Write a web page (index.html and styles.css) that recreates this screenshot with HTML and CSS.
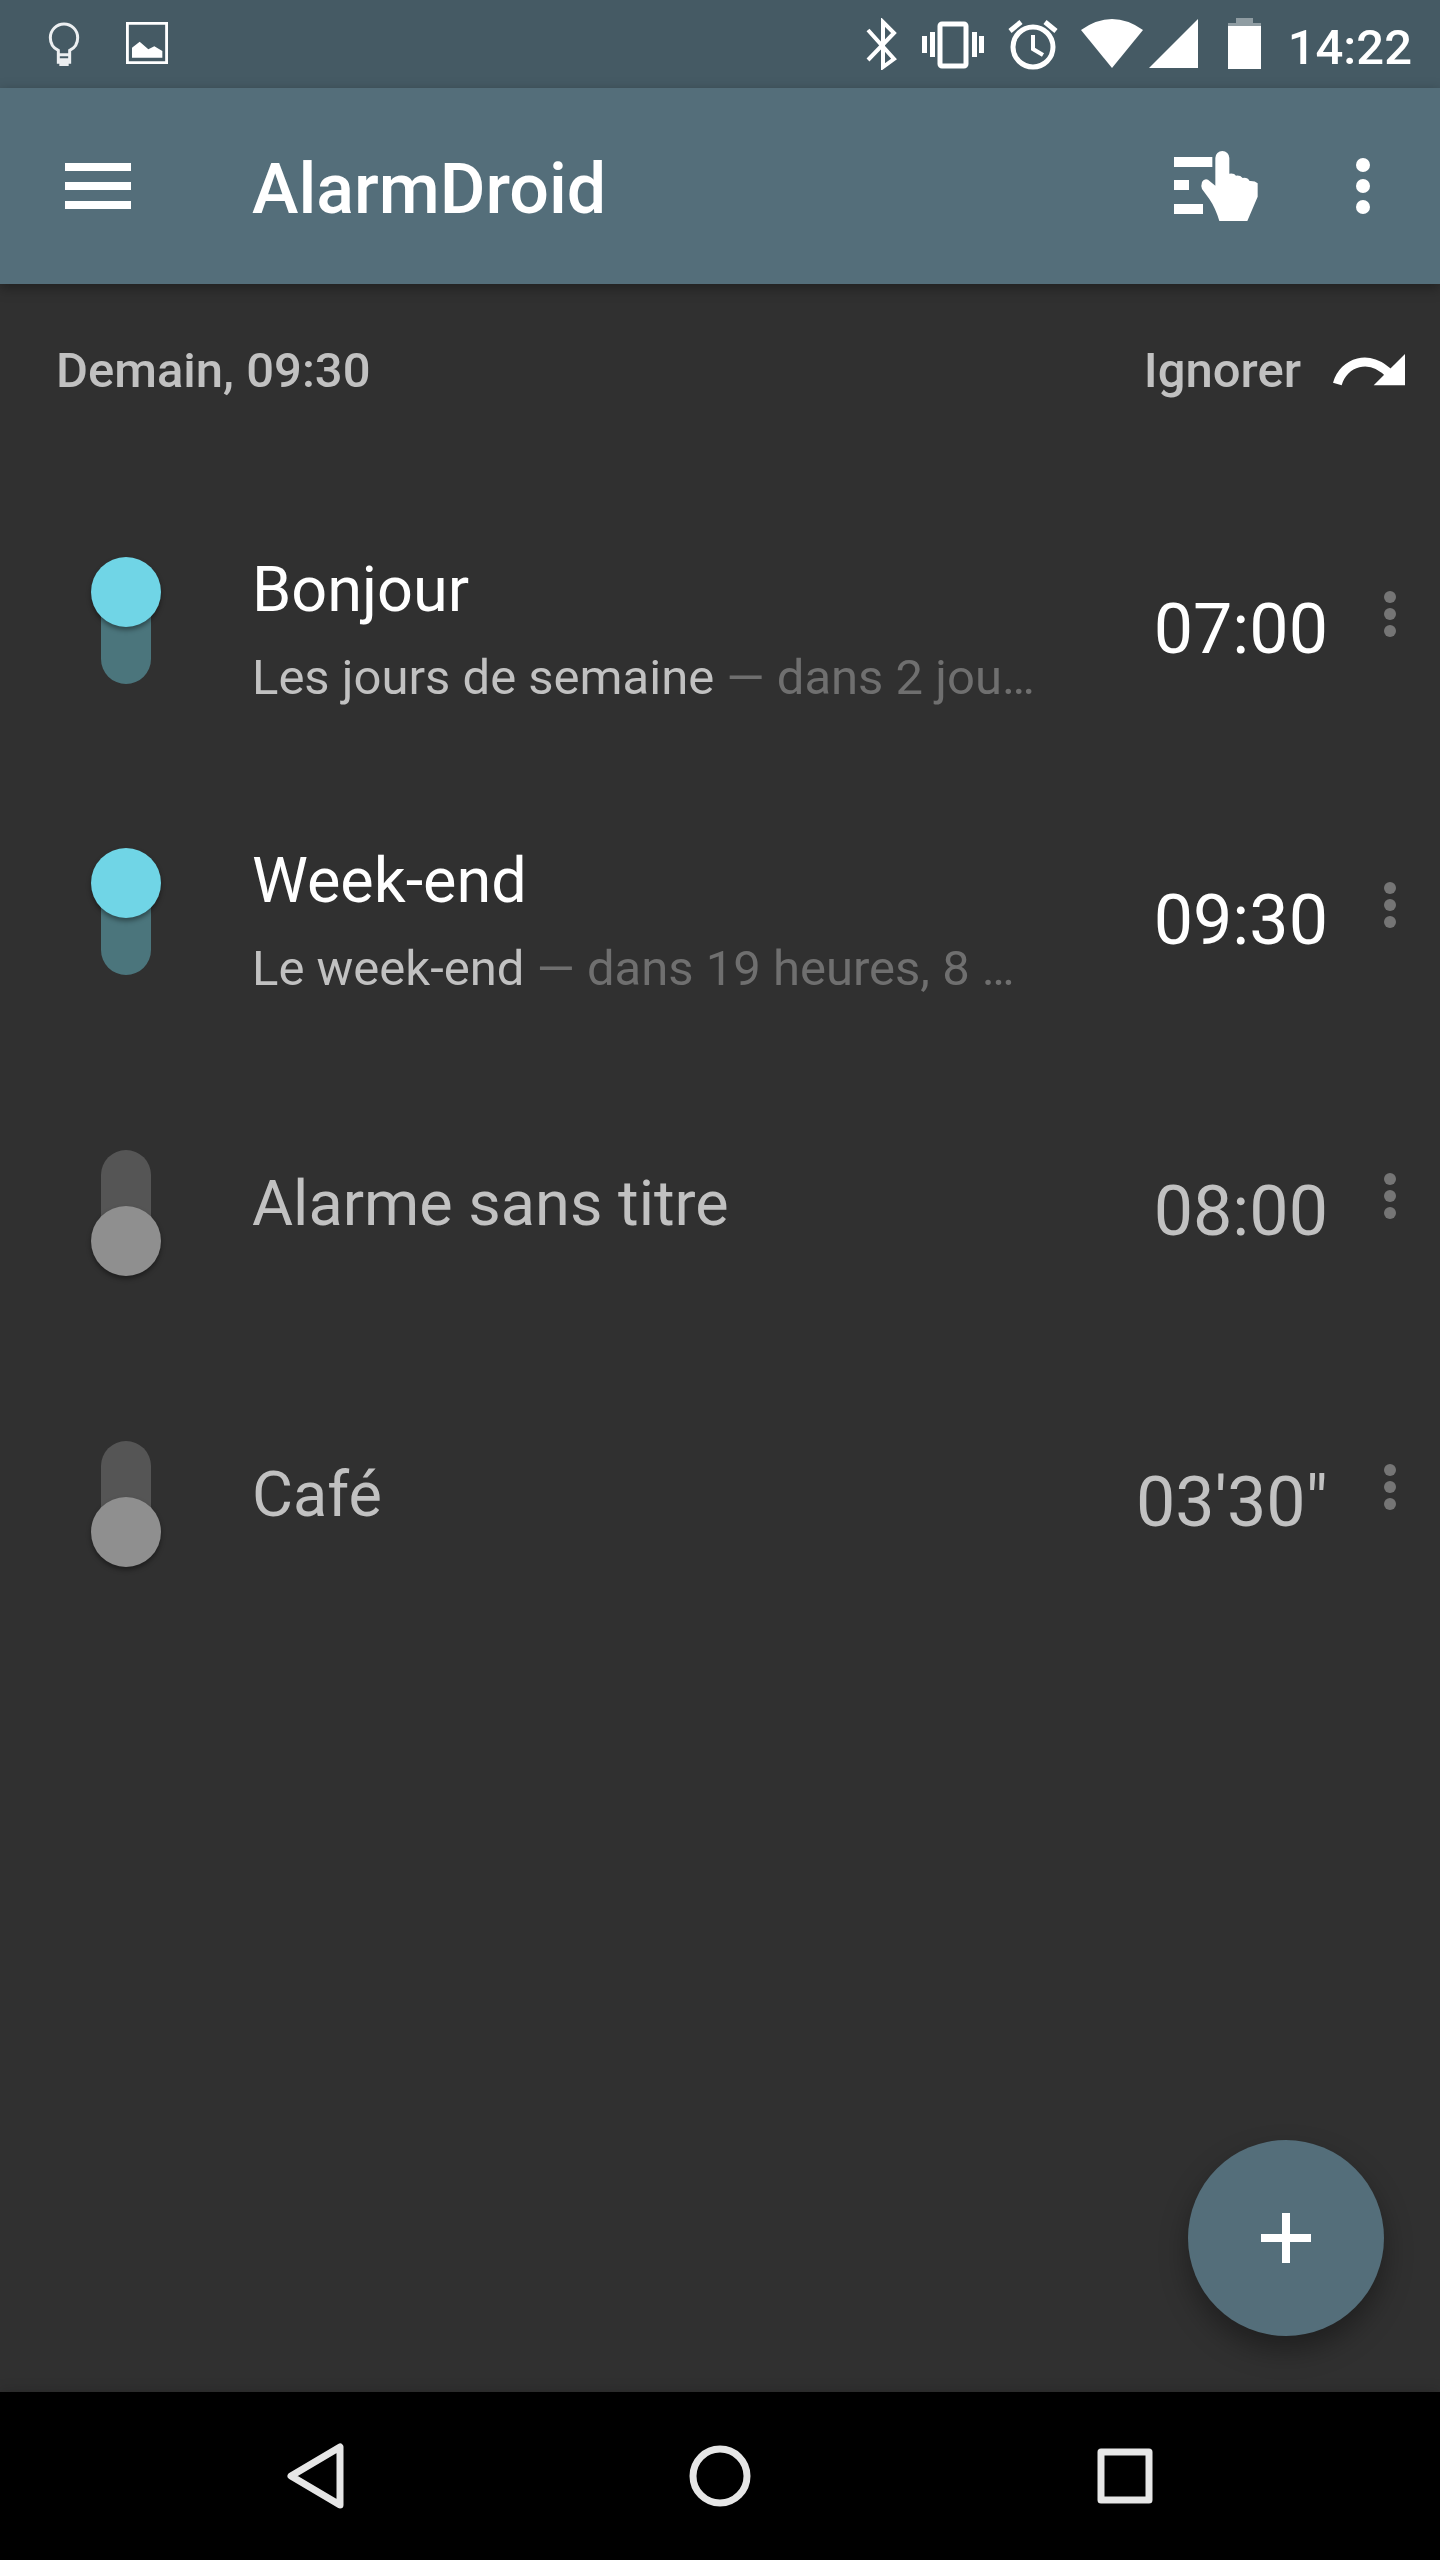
FILE: index.html
```html
<!DOCTYPE html>
<html lang="fr">
<head>
    <meta charset="UTF-8">
    <meta name="viewport" content="width=device-width, initial-scale=1.0">
    <title>AlarmDroid</title>
    <link rel="stylesheet" href="styles.css">
</head>
<body>
    <div class="status-bar">
        <div class="status-left">
            <svg width="32" height="44" viewBox="0 0 96 132" fill="none" stroke="#eceff1" stroke-width="9">
                <path d="M31 121V85C14 77 7 62 7 47a41 41 0 0 1 82 0c0 15-7 30-24 38v36z"/>
                <path d="M31 98h34M31 113h34"/>
                <path d="M34 126h28" stroke-width="12"/>
            </svg>
            <svg width="42" height="42" viewBox="0 0 126 126">
                <path d="M4 4h118v118H4z" fill="none" stroke="#fff" stroke-width="9"/>
                <path d="M18 77L41 59l26 23 18-9 24 14v20H18z" fill="#fff"/>
            </svg>
        </div>
        <div class="status-right">
            <svg width="34" height="52" viewBox="0 0 34 52" fill="none" stroke="#fff" stroke-width="4">
                <path d="M3 12L29 41 18 49V4l11 11L3 42"/>
            </svg>
            <svg width="64" height="52" viewBox="0 0 64 52" fill="#fff">
                <path d="M1 18h5v17H1zM9 14h5v25H9zM51 14h5v25h-5zM58 18h5v17h-5z"/>
                <rect x="19" y="6" width="26" height="42" rx="2" fill="none" stroke="#fff" stroke-width="5"/>
            </svg>
            <svg width="52" height="52" viewBox="0 0 52 52" fill="none" stroke="#fff">
                <circle cx="26" cy="29" r="20" stroke-width="5"/>
                <path d="M26 17v14l10 6" stroke-width="4"/>
                <path d="M3 13L14 4M38 4l11 9" stroke-width="5"/>
            </svg>
            <svg width="125" height="52" viewBox="0 0 125 52" fill="#fff">
                <path d="M0 12Q31-10 62 12L31 50z"/>
                <path d="M117 1v49H68z"/>
            </svg>
            <svg width="38" height="52" viewBox="0 0 38 52">
                <path d="M8 0h17v5h8v3H0V5h8z" fill="#8f9ca2"/>
                <path d="M0 8h33v43H0z" fill="#fff"/>
            </svg>
            <span class="clock">14:22</span>
        </div>
    </div>

    <header class="toolbar">
        <button class="icon-btn menu-btn" aria-label="Menu">
            <svg width="66" height="46" viewBox="0 0 66 46" fill="#fff">
                <path d="M0 0h66v8H0zM0 19h66v8H0zM0 38h66v8H0z"/>
            </svg>
        </button>
        <h1>AlarmDroid</h1>
        <button class="icon-btn" aria-label="Trier">
            <svg width="84" height="70" viewBox="0 0 252 210" fill="#fff">
                <path d="M0 18h115v30H0zM0 87h45v30H0zM0 159h87v30H0z"/>
                <path d="M124 21a21 21 0 0 1 42 0V68q15-2 20 6 12-2 20 7 14-3 21 9 16-1 24 7v40l-31 73h-84q-12-40-30-66L84 114q-4-9 0-21 6-11 18-7l22 18z"/>
            </svg>
        </button>
        <button class="icon-btn more-btn" aria-label="Plus d'options">
            <svg width="14" height="56" viewBox="0 0 14 56" fill="#fff">
                <circle cx="7" cy="7" r="7"/><circle cx="7" cy="28" r="7"/><circle cx="7" cy="49" r="7"/>
            </svg>
        </button>
    </header>

    <main class="content">
        <div class="next-alarm">
            <span>Demain, 09:30</span>
            <button class="skip-btn">
                Ignorer
                <svg width="72" height="32" viewBox="0 0 216 96">
                    <path d="M13 90C31 25 110-5 172 62" fill="none" stroke="#fff" stroke-width="27"/>
                    <path d="M216 0v94h-94z" fill="#fff"/>
                </svg>
            </button>
        </div>

        <ul class="alarm-list">
            <li class="alarm">
                <div class="alarm-switch"><input type="checkbox" id="alarm1" checked></div>
                <div class="alarm-info">
                    <label for="alarm1">Bonjour</label>
                    <p>Les jours de semaine <span>— dans 2 jou…</span></p>
                </div>
                <time>07:00</time>
                <button class="icon-btn row-more" aria-label="Options de Bonjour">
                    <svg width="12" height="46" viewBox="0 0 12 46" fill="#757575">
                        <circle cx="6" cy="6" r="6"/><circle cx="6" cy="23" r="6"/><circle cx="6" cy="40" r="6"/>
                    </svg>
                </button>
            </li>
            <li class="alarm">
                <div class="alarm-switch"><input type="checkbox" id="alarm2" checked></div>
                <div class="alarm-info">
                    <label for="alarm2">Week-end</label>
                    <p>Le week-end <span>— dans 19 heures, 8 …</span></p>
                </div>
                <time>09:30</time>
                <button class="icon-btn row-more" aria-label="Options de Week-end">
                    <svg width="12" height="46" viewBox="0 0 12 46" fill="#757575">
                        <circle cx="6" cy="6" r="6"/><circle cx="6" cy="23" r="6"/><circle cx="6" cy="40" r="6"/>
                    </svg>
                </button>
            </li>
            <li class="alarm off">
                <div class="alarm-switch"><input type="checkbox" id="alarm3"></div>
                <div class="alarm-info">
                    <label for="alarm3">Alarme sans titre</label>
                </div>
                <time>08:00</time>
                <button class="icon-btn row-more" aria-label="Options de Alarme sans titre">
                    <svg width="12" height="46" viewBox="0 0 12 46" fill="#757575">
                        <circle cx="6" cy="6" r="6"/><circle cx="6" cy="23" r="6"/><circle cx="6" cy="40" r="6"/>
                    </svg>
                </button>
            </li>
            <li class="alarm off">
                <div class="alarm-switch"><input type="checkbox" id="alarm4"></div>
                <div class="alarm-info">
                    <label for="alarm4">Café</label>
                </div>
                <time>03'30"</time>
                <button class="icon-btn row-more" aria-label="Options de Café">
                    <svg width="12" height="46" viewBox="0 0 12 46" fill="#757575">
                        <circle cx="6" cy="6" r="6"/><circle cx="6" cy="23" r="6"/><circle cx="6" cy="40" r="6"/>
                    </svg>
                </button>
            </li>
        </ul>

        <button class="fab" aria-label="Ajouter une alarme">
            <svg width="50" height="50" viewBox="0 0 50 50" fill="#fff">
                <path d="M21 0h8v21h21v8H29v21h-8V29H0v-8h21z"/>
            </svg>
        </button>
    </main>

    <nav class="nav-bar">
        <button class="icon-btn" aria-label="Retour">
            <svg width="58" height="66" viewBox="0 0 58 66" fill="none" stroke="#e6e6e6" stroke-width="7" stroke-linejoin="round">
                <path d="M54 4v58L5 33z"/>
            </svg>
        </button>
        <button class="icon-btn" aria-label="Accueil">
            <svg width="62" height="62" viewBox="0 0 62 62" fill="none" stroke="#e6e6e6" stroke-width="7">
                <circle cx="31" cy="31" r="27"/>
            </svg>
        </button>
        <button class="icon-btn" aria-label="Applications récentes">
            <svg width="56" height="56" viewBox="0 0 56 56" fill="none" stroke="#e6e6e6" stroke-width="7" stroke-linejoin="round">
                <path d="M4 4h48v48H4z"/>
            </svg>
        </button>
    </nav>
</body>
</html>
```
FILE: styles.css
```css
* {
    box-sizing: border-box;
}

body {
    font-family: Roboto, sans-serif;
    margin: 0;
    min-height: 100vh;
    display: flex;
    flex-direction: column;
    background-color: #303030;
    color: white;
}

svg {
    display: block;
    flex-shrink: 0;
}

button {
    background: none;
    border: none;
    padding: 0;
    font: inherit;
    color: inherit;
    cursor: pointer;
}

.icon-btn {
    display: flex;
    align-items: center;
    justify-content: center;
}

/* Status bar */
.status-bar {
    display: flex;
    justify-content: space-between;
    align-items: center;
    height: 88px;
    padding: 0 28px 0 48px;
    background-color: #455a64;
}

.status-left {
    display: flex;
    gap: 46px;
}

.status-right {
    display: flex;
    align-items: center;
    gap: 22px;
}

.clock {
    font-size: 49px;
    font-weight: 500;
}

.clock, .toolbar h1, .alarm time {
    padding-top: 6px;
}

/* Toolbar */
.toolbar {
    display: flex;
    align-items: center;
    height: 196px;
    padding: 0 56px 0 65px;
    background-color: #546e7a;
    box-shadow: 0 4px 12px rgba(0, 0, 0, 0.35);
    z-index: 1;
}

.toolbar h1 {
    flex-grow: 1;
    margin: 0 0 0 121px;
    font-size: 70px;
    font-weight: 500;
}

.more-btn {
    width: 42px;
    margin-left: 84px;
}

/* Content */
.content {
    position: relative;
    flex-grow: 1;
}

.next-alarm {
    display: flex;
    justify-content: space-between;
    align-items: center;
    height: 172px;
    margin-bottom: 24px;
    padding: 0 35px 0 56px;
    font-size: 49px;
    font-weight: 500;
    color: #c1c1c1;
}

.skip-btn {
    display: flex;
    align-items: center;
    gap: 32px;
}

.alarm-list {
    list-style: none;
    margin: 0;
    padding: 0;
}

.alarm {
    display: flex;
    align-items: center;
    height: 291px;
}

.alarm-switch {
    display: flex;
    justify-content: center;
    width: 252px;
    flex-shrink: 0;
}

.alarm-switch input {
    appearance: none;
    position: relative;
    display: flex;
    align-items: center;
    justify-content: center;
    width: 70px;
    height: 137px;
    margin: 0;
    cursor: pointer;
}

.alarm-switch input::before {
    content: "";
    width: 50px;
    height: 116px;
    border-radius: 25px;
    background-color: #555;
}

.alarm-switch input::after {
    content: "";
    position: absolute;
    bottom: 0;
    left: 0;
    width: 70px;
    height: 70px;
    border-radius: 50%;
    background-color: #8f8f8f;
    box-shadow: 0 3px 5px rgba(0, 0, 0, 0.4);
}

.alarm-switch input:checked::before {
    background-color: #4b757c;
}

.alarm-switch input:checked::after {
    top: 0;
    background-color: #70d5e6;
}

.alarm-info {
    flex-grow: 1;
    min-width: 0;
    padding-bottom: 8px;
    white-space: nowrap;
}

.alarm-info label {
    display: block;
    font-size: 63px;
    line-height: 106px;
}

.alarm-info p {
    margin: 6px 0 0;
    font-size: 49px;
    line-height: 58px;
    color: #c1c1c1;
}

.alarm-info span {
    color: #6f6f6f;
}

.alarm time {
    font-size: 70px;
}

.off {
    color: #c1c1c1;
}

.row-more {
    width: 100px;
    margin-left: 12px;
    padding-bottom: 24px;
}

.fab {
    position: absolute;
    right: 56px;
    bottom: 56px;
    display: flex;
    align-items: center;
    justify-content: center;
    width: 196px;
    height: 196px;
    border-radius: 50%;
    background-color: #546e7a;
    box-shadow: 0 14px 28px rgba(0, 0, 0, 0.35);
}

/* Navigation bar */
.nav-bar {
    display: grid;
    grid-template-columns: repeat(3, 1fr);
    height: 168px;
    padding: 0 112px;
    background-color: black;
    box-shadow: 0 -2px 12px rgba(0, 0, 0, 0.15);
}
```
